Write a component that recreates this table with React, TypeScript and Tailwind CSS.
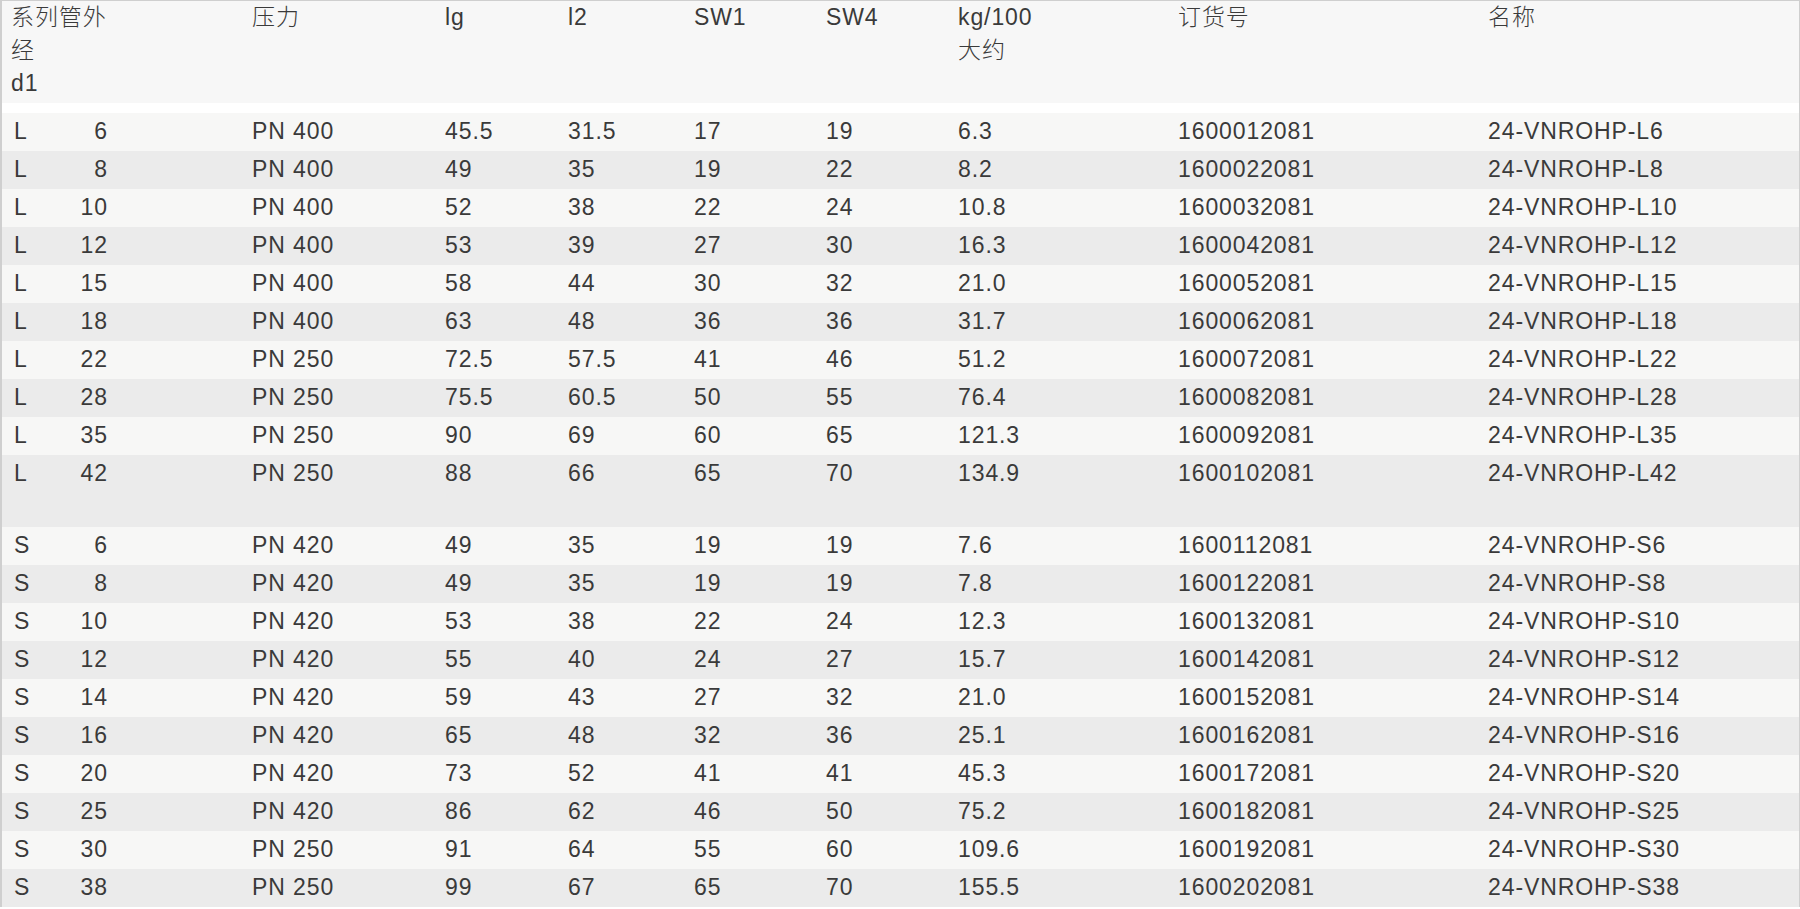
import React from 'react'

const lRows = [
    ['6', '400', '45.5', '31.5', '17', '19', '6.3', '1600012081'],
    ['8', '400', '49', '35', '19', '22', '8.2', '1600022081'],
    ['10', '400', '52', '38', '22', '24', '10.8', '1600032081'],
    ['12', '400', '53', '39', '27', '30', '16.3', '1600042081'],
    ['15', '400', '58', '44', '30', '32', '21.0', '1600052081'],
    ['18', '400', '63', '48', '36', '36', '31.7', '1600062081'],
    ['22', '250', '72.5', '57.5', '41', '46', '51.2', '1600072081'],
    ['28', '250', '75.5', '60.5', '50', '55', '76.4', '1600082081'],
    ['35', '250', '90', '69', '60', '65', '121.3', '1600092081'],
    ['42', '250', '88', '66', '65', '70', '134.9', '1600102081'],
]

const sRows = [
    ['6', '420', '49', '35', '19', '19', '7.6', '1600112081'],
    ['8', '420', '49', '35', '19', '19', '7.8', '1600122081'],
    ['10', '420', '53', '38', '22', '24', '12.3', '1600132081'],
    ['12', '420', '55', '40', '24', '27', '15.7', '1600142081'],
    ['14', '420', '59', '43', '27', '32', '21.0', '1600152081'],
    ['16', '420', '65', '48', '32', '36', '25.1', '1600162081'],
    ['20', '420', '73', '52', '41', '41', '45.3', '1600172081'],
    ['25', '420', '86', '62', '46', '50', '75.2', '1600182081'],
    ['30', '250', '91', '64', '55', '60', '109.6', '1600192081'],
    ['38', '250', '99', '67', '65', '70', '155.5', '1600202081'],
]

const cols = 'grid grid-cols-[238px_193px_123px_126px_132px_132px_220px_310px_1fr]'

function Row({ series, r, shade, tall }: { series: string; r: string[]; shade: boolean; tall?: boolean }) {
    return (
        <div className={`${cols} ${shade ? 'bg-[#ebebeb]' : 'bg-[#f7f7f6]'} ${tall ? 'h-[72px]' : 'h-[38px]'}`}>
            <div className="pt-[2px] leading-[32px]">
                <div className="flex w-[106px] justify-between pl-[12px]">
                    <span>{series}</span>
                    <span>{r[0]}</span>
                </div>
            </div>
            <div className="pl-3 pt-[2px] leading-[32px]">PN {r[1]}</div>
            {r.slice(2).map((v, i) => (
                <div key={i} className="pl-3 pt-[2px] leading-[32px]">{v}</div>
            ))}
            <div className="pl-3 pt-[2px] leading-[32px]">24-VNROHP-{series}{r[0]}</div>
        </div>
    )
}

export default function App() {
    return (
        <div className="w-[1800px] h-[909px] overflow-hidden bg-white text-[23px] tracking-[0.9px] text-[#3a3a3a] font-light font-['Liberation_Sans','Noto_Sans_CJK_SC',sans-serif]">
            <div className="border-l-2 border-r border-t border-[#cfcfcf]">
                {/* header */}
                <div className={`${cols} h-[102px] bg-[#f7f7f7] leading-[33px]`}>
                    <div className="pl-[9px]">系列管外<br />经<br />d1</div>
                    <div className="pl-3">压力</div>
                    <div className="pl-3">lg</div>
                    <div className="pl-3">l2</div>
                    <div className="pl-3">SW1</div>
                    <div className="pl-3">SW4</div>
                    <div className="pl-3">kg/100<br />大约</div>
                    <div className="pl-3">订货号</div>
                    <div className="pl-3">名称</div>
                </div>
                <div className="h-[10px] bg-white" />

                {lRows.map((r, i) => (
                    <Row key={'l' + i} series="L" r={r} shade={i % 2 === 1} tall={i === lRows.length - 1} />
                ))}
                {sRows.map((r, i) => (
                    <Row key={'s' + i} series="S" r={r} shade={i % 2 === 1} />
                ))}
            </div>
        </div>
    )
}
